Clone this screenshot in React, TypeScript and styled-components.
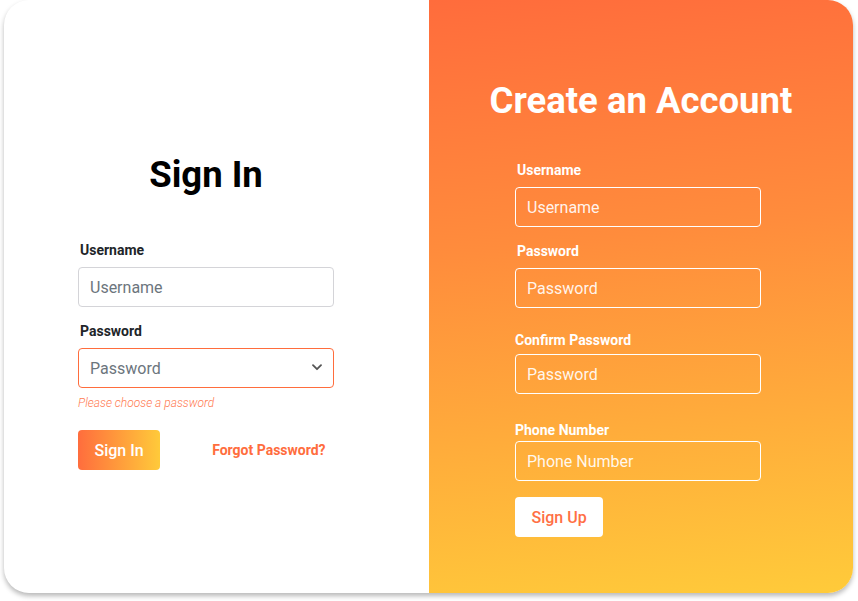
import React from "react";
import styled, { createGlobalStyle } from "styled-components";

const Global = createGlobalStyle`
  html, body { margin: 0; padding: 0; background: #ffffff; }
  body { font-family: Roboto, "Liberation Sans", Arial, sans-serif; }
  * { box-sizing: border-box; }
`;

const ORANGE = "#ff6d3d";
const YELLOW = "#ffca3a";

const Page = styled.div`
  width: 858px;
  height: 601px;
  padding: 0 0 0 4px;
`;

const Card = styled.div`
  width: 849px;
  height: 593px;
  display: flex;
  border-radius: 25px;
  overflow: hidden;
  background: #ffffff;
  box-shadow: 0 3px 5px rgba(0, 0, 0, 0.28);
`;

const LeftPanel = styled.section`
  width: 425px;
  flex: none;
  padding: 154px 0 0 74px;
  display: flex;
  flex-direction: column;
`;

const RightPanel = styled.section`
  flex: 1;
  padding: 80px 0 0 0;
  display: flex;
  flex-direction: column;
  background: linear-gradient(174deg, #ff6c3c 0%, #ff8c3c 40%, #ffcb3a 100%);
`;

const Column = styled.div<{ $width: number; $ml?: number }>`
  width: ${(p) => p.$width}px;
  margin-left: ${(p) => p.$ml ?? 0}px;
  display: flex;
  flex-direction: column;
`;

const Title = styled.h1<{ $light?: boolean }>`
  margin: 0;
  font-size: 36.5px;
  line-height: 42px;
  font-weight: 700;
  text-align: center;
  white-space: nowrap;
  color: ${(p) => (p.$light ? "#ffffff" : "#000000")};
`;

const Field = styled.div<{ $mt: number; $gap: number }>`
  display: flex;
  flex-direction: column;
  margin-top: ${(p) => p.$mt}px;
  gap: ${(p) => p.$gap}px;
`;

const Label = styled.label<{ $light?: boolean; $indent?: boolean }>`
  font-size: 14px;
  line-height: 17px;
  font-weight: 700;
  padding-left: ${(p) => (p.$indent ? 2 : 0)}px;
  color: ${(p) => (p.$light ? "#ffffff" : "#212529")};
`;

const Input = styled.input<{ $light?: boolean }>`
  width: 100%;
  height: 40px;
  padding: 0 11px;
  border-radius: 4px;
  font-family: Roboto, "Liberation Sans", Arial, sans-serif;
  font-size: 16px;
  outline: none;
  background: transparent;
  border: 1px solid ${(p) => (p.$light ? "#ffffff" : "#d4d4d8")};
  color: ${(p) => (p.$light ? "#ffffff" : "#495057")};
  &::placeholder {
    color: ${(p) => (p.$light ? "rgba(255,255,255,0.92)" : "#6c757d")};
    opacity: 1;
  }
`;

const SelectWrap = styled.div`
  position: relative;
  width: 100%;
`;

const Select = styled.select`
  appearance: none;
  -webkit-appearance: none;
  width: 100%;
  height: 40px;
  padding: 0 11px;
  border: 1px solid ${ORANGE};
  border-radius: 4px;
  background: #ffffff;
  font-family: Roboto, "Liberation Sans", Arial, sans-serif;
  font-size: 16px;
  color: #6c757d;
  outline: none;
`;

const Chevron = styled.svg`
  position: absolute;
  right: 12px;
  top: 16px;
  pointer-events: none;
`;

const ErrorText = styled.div`
  margin-top: 8px;
  font-size: 12px;
  line-height: 14px;
  font-style: italic;
  font-weight: 300;
  color: #ff7b52;
`;

const Actions = styled.div`
  margin-top: 20px;
  display: flex;
  align-items: center;
  gap: 52px;
`;

const Button = styled.button<{ $variant: "gradient" | "white" }>`
  height: 40px;
  padding: 0 16.5px;
  border: none;
  border-radius: 4px;
  font-family: Roboto, "Liberation Sans", Arial, sans-serif;
  font-size: 16px;
  font-weight: 500;
  cursor: pointer;
  align-self: flex-start;
  background: ${(p) =>
    p.$variant === "gradient"
      ? `linear-gradient(90deg, ${ORANGE} 0%, ${YELLOW} 100%)`
      : "#ffffff"};
  color: ${(p) => (p.$variant === "gradient" ? "#ffffff" : "#ff6f45")};
`;

const SignUpButton = styled(Button)`
  margin-top: 16px;
`;

const LinkText = styled.a`
  font-size: 14px;
  font-weight: 700;
  color: ${ORANGE};
  text-decoration: none;
`;

export default function App() {
  return (
    <>
      <Global />
      <Page>
        <Card>
          <LeftPanel>
            <Column $width={256}>
              <Title>Sign In</Title>
              <Field $mt={46} $gap={8}>
                <Label $indent>Username</Label>
                <Input placeholder="Username" />
              </Field>
              <Field $mt={16} $gap={8}>
                <Label $indent>Password</Label>
                <SelectWrap>
                  <Select defaultValue="">
                    <option value="" disabled>
                      Password
                    </option>
                  </Select>
                  <Chevron width="10" height="7" viewBox="0 0 10 7">
                    <polyline
                      points="1,1.2 5,5.2 9,1.2"
                      fill="none"
                      stroke="#555"
                      strokeWidth="1.8"
                      strokeLinecap="round"
                      strokeLinejoin="round"
                    />
                  </Chevron>
                </SelectWrap>
              </Field>
              <ErrorText>Please choose a password</ErrorText>
              <Actions>
                <Button $variant="gradient">Sign In</Button>
                <LinkText href="#">Forgot Password?</LinkText>
              </Actions>
            </Column>
          </LeftPanel>
          <RightPanel>
            <Title $light>Create an Account</Title>
            <Column $width={246} $ml={86}>
              <Field $mt={40} $gap={8}>
                <Label $light $indent>Username</Label>
                <Input $light placeholder="Username" />
              </Field>
              <Field $mt={16} $gap={8}>
                <Label $light $indent>Password</Label>
                <Input $light type="password" placeholder="Password" />
              </Field>
              <Field $mt={24} $gap={5}>
                <Label $light>Confirm Password</Label>
                <Input $light type="password" placeholder="Password" />
              </Field>
              <Field $mt={28} $gap={2}>
                <Label $light>Phone Number</Label>
                <Input $light placeholder="Phone Number" />
              </Field>
              <SignUpButton $variant="white">Sign Up</SignUpButton>
            </Column>
          </RightPanel>
        </Card>
      </Page>
    </>
  );
}
